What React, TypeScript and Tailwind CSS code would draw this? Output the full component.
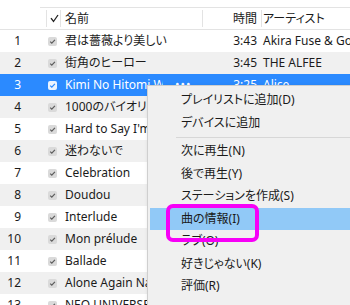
const rows = [
  { n: 1, title: "君は薔薇より美しい", time: "3:43", artist: "Akira Fuse & Gontiti" },
  { n: 2, title: "街角のヒーロー", time: "3:45", artist: "THE ALFEE" },
  { n: 3, title: "Kimi No Hitomi Wo Tojite", time: "3:25", artist: "Alice" },
  { n: 4, title: "1000のバイオリン", time: "", artist: "" },
  { n: 5, title: "Hard to Say I'm Sorry", time: "", artist: "" },
  { n: 6, title: "迷わないで", time: "", artist: "" },
  { n: 7, title: "Celebration", time: "", artist: "" },
  { n: 8, title: "Doudou", time: "", artist: "" },
  { n: 9, title: "Interlude", time: "", artist: "" },
  { n: 10, title: "Mon prélude", time: "", artist: "" },
  { n: 11, title: "Ballade", time: "", artist: "" },
  { n: 12, title: "Alone Again Naturally", time: "", artist: "" },
  { n: 13, title: "NEO UNIVERSE", time: "", artist: "" },
];

const menu = [
  { label: "プレイリストに追加(D)" },
  { label: "デバイスに追加" },
  { sep: true },
  { label: "次に再生(N)" },
  { label: "後で再生(Y)" },
  { label: "ステーションを作成(S)" },
  { label: "曲の情報(I)", active: true },
  { label: "ラブ(O)" },
  { label: "好きじゃない(K)" },
  { label: "評価(R)" },
];

function Check({ selected }: { selected?: boolean }) {
  return (
    <svg width="9" height="9" viewBox="0 0 9 9">
      <rect x="0" y="0" width="9" height="9" rx="2" fill={selected ? "#eaf3ff" : "#dadada"} />
      <polyline
        points="2.2,4.6 3.8,6.2 6.9,2.8"
        fill="none"
        stroke={selected ? "#2b8aff" : "#5c5c5c"}
        strokeWidth="1.2"
      />
    </svg>
  );
}

function Sep() {
  return <div className="w-px self-stretch my-[2px] bg-[#e3e3e3]" />;
}

export default function App() {
  return (
    <div className="relative h-[305px] w-[350px] overflow-hidden bg-white text-[12px] text-[#1b1b1b] font-['Noto_Sans','Noto_Sans_CJK_JP',sans-serif] [font-feature-settings:'palt']">
      <div className="h-[7px]" />
      <div className="ml-[40px] h-px bg-[#e3e3e3]" />
      <div className="flex h-[22px] items-center border-b border-[#e3e3e3]">
        <div className="w-[46px]" />
        <Sep />
        <div className="flex w-[13px] justify-center pl-[1px]">
          <svg width="9" height="9" viewBox="0 0 9 9">
            <polyline points="1,4.2 3.5,7.5 8,1" fill="none" stroke="#222" strokeWidth="1.3" />
          </svg>
        </div>
        <Sep />
        <div className="w-[141px] pl-[4px]">名前</div>
        <Sep />
        <div className="w-[58px] pr-[4px] text-right">時間</div>
        <Sep />
        <div className="flex-1 pl-[1px] whitespace-nowrap">アーティスト</div>
      </div>

      {rows.map((r) => {
        const sel = r.n === 3;
        const bg = sel ? "bg-[#2b8aff] text-white" : r.n % 2 === 0 ? "bg-[#f0f0f0]" : "bg-white";
        return (
          <div key={r.n} className={`flex h-[22px] items-center whitespace-nowrap ${bg}`}>
            <div className="w-[46px] pr-[25px] text-right">{r.n}</div>
            <div className="flex w-[14px] pl-[2px]">
              <Check selected={sel} />
            </div>
            {sel ? (
              <div className="flex w-[142px] items-center pl-[5px]">
                <span className="w-[98px] overflow-hidden">{r.title}</span>
                <span className="ml-[12px] tracking-[1px]">•••</span>
              </div>
            ) : (
              <div className="w-[142px] overflow-hidden pl-[5px]">{r.title}</div>
            )}
            <div className="w-[59px] pr-[4px] text-right">{r.time}</div>
            <div className="flex-1 overflow-hidden pl-[2px]">{r.artist}</div>
          </div>
        );
      })}

      <div className="absolute left-[147px] top-[85px] h-[240px] w-[230px] border border-[#cfcfcf] bg-[#f0f0f0] px-[2px] pt-[3px] shadow-[2px_2px_4px_rgba(0,0,0,0.25)]">
        {menu.map((m, i) =>
          m.sep ? (
            <div key={i} className="flex h-[6px] items-center pl-[26px]">
              <div className="h-px w-full bg-[#d7d7d7]" />
            </div>
          ) : (
            <div
              key={i}
              className={`flex h-[22.5px] items-center pl-[31px] text-[#1a1a1a] whitespace-nowrap ${m.active ? "bg-[#91c9f7]" : ""}`}
            >
              {m.label}
            </div>
          )
        )}
      </div>

      <div className="absolute left-[166px] top-[204px] h-[38px] w-[93px] rounded-[7px] border-[4px] border-[#f700f7]" />
    </div>
  );
}
